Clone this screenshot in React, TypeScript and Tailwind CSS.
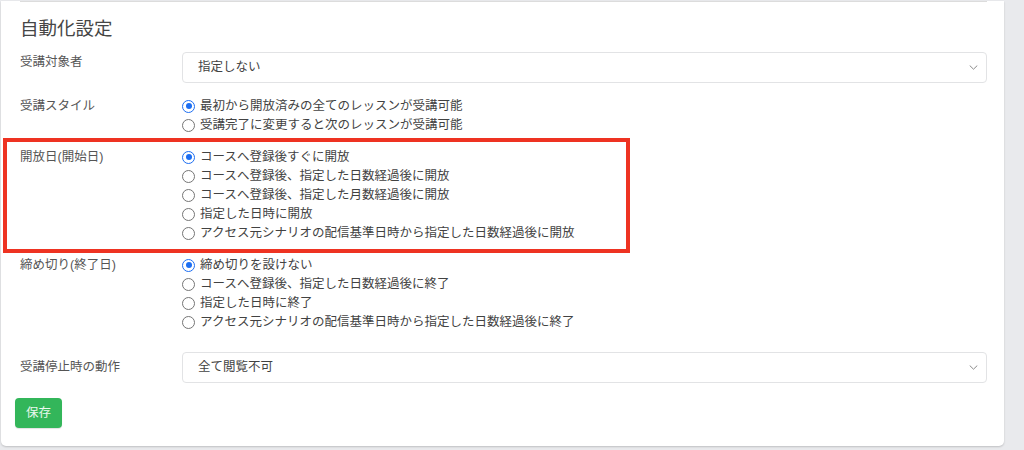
import React from "react";

const font = "font-['Liberation_Sans','Noto_Sans_CJK_JP',sans-serif]";

function Radio({ label, checked }: { label: string; checked?: boolean }) {
  return (
    <label className="flex h-[19px] items-center">
      {checked ? (
        <span className="flex h-[13px] w-[13px] items-center justify-center rounded-full border-[1.5px] border-[#1c6ef2] bg-white">
          <span className="h-[6px] w-[6px] rounded-full bg-[#1c6ef2]" />
        </span>
      ) : (
        <span className="h-[13px] w-[13px] rounded-full border border-[#757575] bg-white" />
      )}
      <span className="ml-[5px] text-[12.5px] leading-[19px] text-[#424242]">{label}</span>
    </label>
  );
}

function Select({ value }: { value: string }) {
  return (
    <div className="flex h-[31px] flex-1 items-center justify-between rounded-[4px] border border-[#e2e3e5] bg-white pl-[15px] pr-[8px]">
      <span className="text-[12.5px] text-[#424242]">{value}</span>
      <svg width="9" height="5" viewBox="0 0 9 5" fill="none">
        <path d="M1 0.8l3.5 3.4 3.5-3.4" stroke="#8a8a8a" strokeWidth="1" strokeLinecap="round" strokeLinejoin="round" />
      </svg>
    </div>
  );
}

function Label({ text }: { text: string }) {
  return <div className="w-[162px] shrink-0 text-[12.5px] leading-[19px] text-[#555]">{text}</div>;
}

export default function App() {
  return (
    <div className={`h-[450px] overflow-hidden bg-[#e9eaed] ${font}`}>
      <div className="ml-px w-[1003px] rounded-b-[5px] bg-white pb-[18px] pl-[19px] pr-[17px] shadow-[0_1px_2px_rgba(0,0,0,0.18)]">
        <div className="h-px bg-[#dcdcdc] mt-px" />
        <h2 className="mt-[14px] text-[18.5px] leading-[26px] text-[#464646]">自動化設定</h2>

        <div className="mt-[10px] flex">
          <div className="pt-[0.5px]">
            <Label text="受講対象者" />
          </div>
          <Select value="指定しない" />
        </div>

        <div className="mt-[13.5px] flex">
          <Label text="受講スタイル" />
          <div>
            <Radio label="最初から開放済みの全てのレッスンが受講可能" checked />
            <Radio label="受講完了に変更すると次のレッスンが受講可能" />
          </div>
        </div>

        <div className="relative mt-[13px] flex">
          <Label text="開放日(開始日)" />
          <div>
            <Radio label="コースへ登録後すぐに開放" checked />
            <Radio label="コースへ登録後、指定した日数経過後に開放" />
            <Radio label="コースへ登録後、指定した月数経過後に開放" />
            <Radio label="指定した日時に開放" />
            <Radio label="アクセス元シナリオの配信基準日時から指定した日数経過後に開放" />
          </div>
          <div className="pointer-events-none absolute left-[-17px] top-[-9.5px] h-[115px] w-[627px] border-4 border-[#ee3322]" />
        </div>

        <div className="mt-[13px] flex">
          <Label text="締め切り(終了日)" />
          <div>
            <Radio label="締め切りを設けない" checked />
            <Radio label="コースへ登録後、指定した日数経過後に終了" />
            <Radio label="指定した日時に終了" />
            <Radio label="アクセス元シナリオの配信基準日時から指定した日数経過後に終了" />
          </div>
        </div>

        <div className="mt-[20.5px] flex items-center">
          <Label text="受講停止時の動作" />
          <Select value="全て閲覧不可" />
        </div>

        <button className="-ml-[5px] mt-[15px] flex h-[30px] w-[47px] items-center justify-center rounded-[4px] bg-[#33b65a] text-[12.5px] text-white/90 shadow-[0_1px_1px_rgba(0,0,0,0.12)]">
          保存
        </button>
      </div>
    </div>
  );
}
